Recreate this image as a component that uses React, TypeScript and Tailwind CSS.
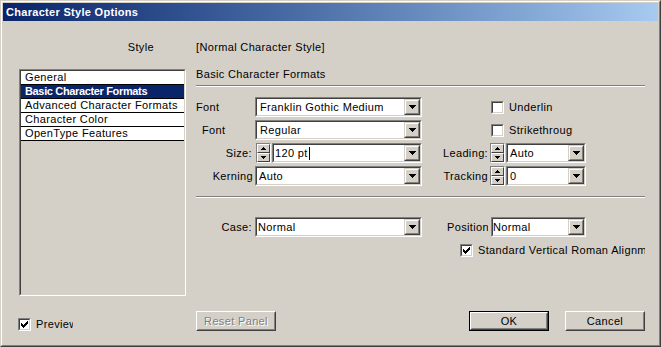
import React from "react";

const txt = "text-[11px] leading-[13px] tracking-[0.35px] text-black";

function DownArrow() {
  return (
    <svg width="7" height="4" viewBox="0 0 7 4" shapeRendering="crispEdges">
      <path d="M0 0h7v1H0z M1 1h5v1H1z M2 2h3v1H2z M3 3h1v1H3z" fill="#000" />
    </svg>
  );
}

function SmallArrow({ up }: { up?: boolean }) {
  return (
    <svg width="5" height="3" viewBox="0 0 5 3" shapeRendering="crispEdges">
      {up ? (
        <path d="M2 0h1v1H2z M1 1h3v1H1z M0 2h5v1H0z" fill="#000" />
      ) : (
        <path d="M0 0h5v1H0z M1 1h3v1H1z M2 2h1v1H2z" fill="#000" />
      )}
    </svg>
  );
}

function DropBtn() {
  return (
    <div className="w-[16px] h-full shrink-0 border border-t-[#d4d0c8] border-l-[#d4d0c8] border-r-[#404040] border-b-[#404040]">
      <div className="w-full h-full bg-[#d4d0c8] border border-t-white border-l-white border-r-[#808080] border-b-[#808080] flex items-center justify-center">
        <DownArrow />
      </div>
    </div>
  );
}

function Combo({ className, children }: { className: string; children?: React.ReactNode }) {
  return (
    <div className={`h-[20px] shrink-0 border border-t-[#808080] border-l-[#808080] border-r-white border-b-white ${className}`}>
      <div className="h-full flex bg-white border border-t-[#404040] border-l-[#404040] border-r-[#d4d0c8] border-b-[#d4d0c8]">
        <div className={`flex-1 flex items-center overflow-hidden whitespace-nowrap ${txt}`}>{children}</div>
        <DropBtn />
      </div>
    </div>
  );
}

function SpinHalf({ up }: { up?: boolean }) {
  return (
    <div className="h-[9px] w-full border border-t-white border-l-white border-r-[#404040] border-b-[#404040] bg-[#d4d0c8] flex items-center justify-center">
      <SmallArrow up={up} />
    </div>
  );
}

function Spinner() {
  return (
    <div className="w-[15px] h-[20px] shrink-0 border border-t-[#808080] border-l-[#808080] border-r-white border-b-white flex flex-col">
      <SpinHalf up />
      <SpinHalf />
    </div>
  );
}

function Check({ checked }: { checked?: boolean }) {
  return (
    <div className="w-[13px] h-[13px] shrink-0 border border-t-[#808080] border-l-[#808080] border-r-white border-b-white">
      <div className="w-full h-full bg-white border border-t-[#404040] border-l-[#404040] border-r-[#d4d0c8] border-b-[#d4d0c8] flex items-center justify-center">
        {checked && (
          <svg width="7" height="7" viewBox="0 0 7 7" shapeRendering="crispEdges">
            <path
              d="M6 0h1v1H6z M5 1h2v1H5z M0 2h1v1H0z M4 2h3v1H4z M0 3h2v1H0z M3 3h3v1H3z M0 4h5v1H0z M1 5h3v1H1z M2 6h1v1H2z"
              fill="#000"
            />
          </svg>
        )}
      </div>
    </div>
  );
}

function Button({ children, def, disabled, className = "" }: { children: React.ReactNode; def?: boolean; disabled?: boolean; className?: string }) {
  const core = (
    <div className="h-full border border-t-white border-l-white border-r-[#404040] border-b-[#404040]">
      <div className="h-full border border-t-[#d4d0c8] border-l-[#d4d0c8] border-r-[#808080] border-b-[#808080] flex items-center justify-center">
        <span
          className={
            disabled
              ? "text-[11px] leading-[13px] tracking-[0.35px] text-[#808080] [text-shadow:1px_1px_0_#fff]"
              : txt
          }
        >
          {children}
        </span>
      </div>
    </div>
  );
  return (
    <div className={`h-[20px] w-[80px] shrink-0 ${def ? "border border-black" : ""} ${className}`}>{core}</div>
  );
}

function Sep() {
  return <div className="h-[2px] w-full border-t border-t-[#808080] border-b border-b-white" />;
}

const listItems = ["General", "Basic Character Formats", "Advanced Character Formats", "Character Color", "OpenType Features"];

export default function App() {
  return (
    <div className="font-['Liberation_Sans',Arial,sans-serif] w-[661px] h-[347px] bg-[#d4d0c8] border border-t-[#d4d0c8] border-l-[#d4d0c8] border-r-[#404040] border-b-[#404040]">
      <div className="w-full h-full border border-t-white border-l-white border-r-[#808080] border-b-[#808080] p-[1px] flex flex-col">
        {/* Title bar */}
        <div className="h-[18px] shrink-0 bg-linear-to-r from-[#0a246a] to-[#a6caf0] flex items-center pl-[3px]">
          <span className="text-[11px] leading-[13px] font-bold text-white tracking-[0.3px]">Character Style Options</span>
        </div>

        {/* Style row */}
        <div className={`mt-[19px] h-[14px] flex items-center ${txt}`}>
          <div className="w-[151px] text-right">Style</div>
          <div className="ml-[42px]">[Normal Character Style]</div>
        </div>

        {/* Main row */}
        <div className="mt-[13px] h-[230px] flex">
          {/* list */}
          <div className="ml-[16px] mt-[2px] w-[167px] h-[227px] shrink-0 border border-t-[#808080] border-l-[#808080] border-r-white border-b-white">
            <div className="h-full bg-[#d4d0c8] border border-t-[#404040] border-l-[#404040] border-r-[#d4d0c8] border-b-[#d4d0c8] flex flex-col">
              {listItems.map((it, i) => (
                <div
                  key={it}
                  className={`h-[14px] border-b border-b-black pl-[4px] whitespace-nowrap overflow-hidden text-[11px] leading-[13px] ${
                    i === 1 ? "bg-[#0a246a] text-white font-bold tracking-[-0.35px]" : "bg-white text-black tracking-[0.35px]"
                  }`}
                >
                  {it}
                </div>
              ))}
            </div>
          </div>

          {/* right column */}
          <div className="ml-[10px] w-[449px] flex flex-col">
            <div className={`h-[14px] flex items-center ${txt}`}>Basic Character Formats</div>
            <div className="mt-[4px]">
              <Sep />
            </div>

            <div className="mt-[10px] flex flex-col gap-[3px]">
              {/* Row 1 */}
              <div className="flex h-[20px] items-center">
                <div className={`w-[59px] ${txt}`}>Font</div>
                <Combo className="w-[167px]">
                  <span className="pl-[3px]">Franklin Gothic Medium</span>
                </Combo>
                <div className="ml-[69px] flex items-center">
                  <Check />
                  <span className={`ml-[5px] w-[44px] overflow-hidden whitespace-nowrap ${txt}`}>Underline</span>
                </div>
              </div>
              {/* Row 2 */}
              <div className="flex h-[20px] items-center">
                <div className={`w-[59px] pl-[6px] ${txt}`}>Font</div>
                <Combo className="w-[167px]">
                  <span className="pl-[3px]">Regular</span>
                </Combo>
                <div className="ml-[69px] flex items-center">
                  <Check />
                  <span className={`ml-[5px] w-[64px] overflow-hidden whitespace-nowrap ${txt}`}>Strikethrough</span>
                </div>
              </div>
              {/* Row 3 */}
              <div className="flex h-[20px] items-center">
                <div className={`w-[60px] text-right pr-[4px] ${txt}`}>Size:</div>
                <Spinner />
                <Combo className="ml-[1px] w-[150px]">
                  <span className="pl-[1px]">120 pt</span>
                  <span className="ml-[1px] w-[1px] h-[13px] bg-black" />
                </Combo>
                <div className={`ml-[21px] w-[47px] text-right pr-[2px] whitespace-nowrap ${txt}`}>Leading:</div>
                <Spinner />
                <Combo className="ml-[1px] w-[80px]">
                  <span className="pl-[2px]">Auto</span>
                </Combo>
              </div>
              {/* Row 4 */}
              <div className="flex h-[20px] items-center">
                <div className={`w-[59px] text-right pr-[2px] ${txt}`}>Kerning</div>
                <Combo className="w-[167px]">
                  <span className="pl-[2px]">Auto</span>
                </Combo>
                <div className={`ml-[21px] w-[47px] text-right pr-[2px] whitespace-nowrap ${txt}`}>Tracking</div>
                <Spinner />
                <Combo className="ml-[1px] w-[80px]">
                  <span className="pl-[2px]">0</span>
                </Combo>
              </div>
            </div>

            <div className="mt-[10px]">
              <Sep />
            </div>

            {/* Case row */}
            <div className="mt-[19px] flex h-[20px] items-center">
              <div className={`w-[59px] text-right pr-[3px] ${txt}`}>Case:</div>
              <Combo className="w-[167px]">
                <span className="pl-[1px]">Normal</span>
              </Combo>
              <div className={`ml-[25px] w-[41px] mr-[3px] overflow-hidden whitespace-nowrap ${txt}`}>Position</div>
              <Combo className="w-[95px]">
                <span>Normal</span>
              </Combo>
            </div>

            {/* Std vertical */}
            <div className="mt-[7px] ml-[264px] flex h-[13px] items-center">
              <Check checked />
              <span className={`ml-[5px] w-[167px] overflow-hidden whitespace-nowrap ${txt}`}>Standard Vertical Roman Alignment</span>
            </div>
          </div>
        </div>

        {/* Bottom row */}
        <div className="mt-[14px] h-[20px] flex">
          <div className="w-[193px] shrink-0 flex items-start pl-[15px] pt-[7px]">
            <Check checked />
            <span className={`ml-[5px] w-[37px] overflow-hidden whitespace-nowrap ${txt}`}>Preview</span>
          </div>
          <Button disabled>Reset Panel</Button>
          <Button def className="ml-auto">
            OK
          </Button>
          <Button className="ml-[16px] mr-[13px]">Cancel</Button>
        </div>
      </div>
    </div>
  );
}
